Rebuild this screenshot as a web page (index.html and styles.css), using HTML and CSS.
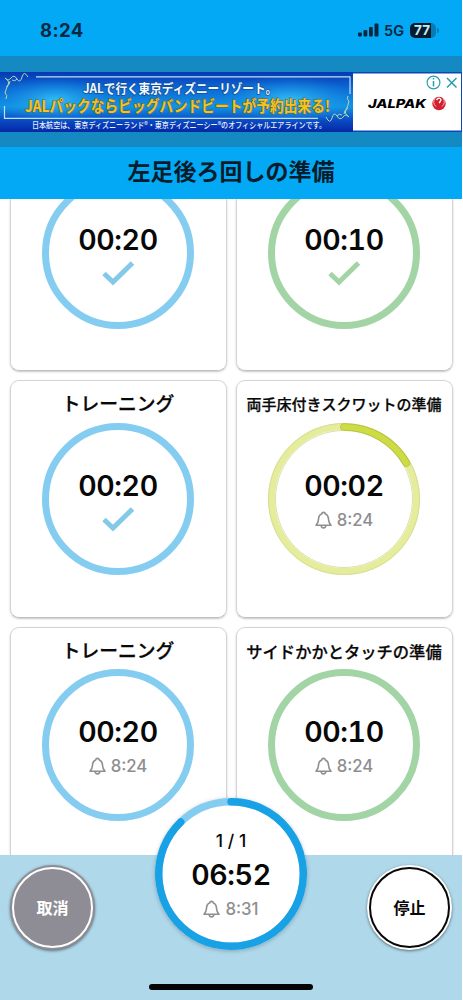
FILE: index.html
```html
<!DOCTYPE html>
<html lang="ja">
<head>
<meta charset="utf-8">
<title>左足後ろ回しの準備</title>
<link rel="stylesheet" href="styles.css">
</head>
<body>
<svg class="defs" aria-hidden="true">
  <symbol id="check" viewBox="0 0 32 26"><path d="M2 13.500 11 22 30.500 3" fill="none" stroke="currentColor" stroke-width="5"/></symbol>
  <symbol id="bell" viewBox="0 0 17 18"><path d="M1 14.200C3 12.200 3.400 11 3.500 8.200 3.600 5 5 3.500 6.700 2.900 7 .9 10 .9 10.300 2.900 12 3.500 13.400 5 13.500 8.200 13.600 11 14 12.200 16 14.200ZM6.100 14.500C6.300 17.600 10.700 17.600 10.900 14.500" fill="none" stroke="currentColor" stroke-width="1.600" stroke-linejoin="round"/></symbol>
</svg>
<div class="app">
  <header class="status">
    <span class="clock">8:24</span>
    <span class="indicators">
      <svg class="signal" viewBox="0 0 21 14"><rect x="0" y="9.500" width="3.800" height="4" rx="1"/><rect x="5.500" y="7" width="3.800" height="6.500" rx="1"/><rect x="11" y="4" width="3.800" height="9.500" rx="1"/><rect x="16.500" y=".5" width="4" height="13" rx="1"/></svg>
      <span class="network">5G</span>
      <span class="battery"><span class="cell">77</span><i class="tip"></i></span>
    </span>
  </header>
  <div class="adband">
    <div class="ad">
      <svg class="banner" viewBox="0 0 353 60">
        <defs>
          <linearGradient id="sky" x1="0" y1="0" x2="0" y2="1"><stop offset="0" stop-color="#0738b3"/><stop offset=".25" stop-color="#0b65d2"/><stop offset=".58" stop-color="#1194e4"/><stop offset=".8" stop-color="#0b4cc4"/><stop offset="1" stop-color="#0527a5"/></linearGradient>
          <radialGradient id="glow"><stop offset="0" stop-color="#35c5f7" stop-opacity=".9"/><stop offset="1" stop-color="#1590e6" stop-opacity="0"/></radialGradient>
        </defs>
        <rect width="353" height="60" fill="url(#sky)"/>
        <ellipse cx="55" cy="28" rx="60" ry="23" fill="url(#glow)"/>
        <ellipse cx="290" cy="28" rx="70" ry="24" fill="url(#glow)"/>
        <path d="M36 4.800H350V22M4.500 34V46.300H318" fill="none" stroke="#bfe0ef" stroke-width="1.200"/>
        <g fill="none" stroke="#b6d4ae" stroke-width="1">
          <path d="M5 6q3 4 6 0t6 1 5-2 6 0M5 6q5 3 3 7t-3 8M6 15q4-2 4-6M12 8q3 2 5-1M5 21q3 2 1 6"/>
          <path d="M349 45q-3-4-6 0t-6-1-5 2-6-1M349 45q-5-3-3-7t3-9M348 36q-4 2-4 6M342 43q-3-2-5 1M349 29q-3-2-1-5"/>
        </g>
        <g class="ad-text">
          <text x="83" y="21" font-size="13" textLength="194" lengthAdjust="spacingAndGlyphs" fill="#eefaff" stroke="#174f9b" stroke-width="1.600">JALで行く東京ディズニーリゾート。</text>
          <text x="25" y="39.500" font-size="15.500" textLength="305" lengthAdjust="spacingAndGlyphs" fill="#f6c21e" stroke="#5c6848" stroke-width="1.200">JALパックならビッグバンドビートが予約出来る!</text>
          <text class="fine" x="32" y="56.300" font-size="8.500" textLength="294" lengthAdjust="spacingAndGlyphs" fill="#e6f0ff">日本航空は、東京ディズニーランド®・東京ディズニーシー®のオフィシャルエアラインです。</text>
        </g>
      </svg>
      <svg class="brand" viewBox="0 0 109 60">
        <rect x="0" y="1.500" width="108" height="57" fill="#fff"/>
        <text class="jalpak" x="15" y="35.800" textLength="58" lengthAdjust="spacingAndGlyphs">JALPAK</text>
        <circle cx="86" cy="31.500" r="6.700" fill="#d3202f"/>
        <path d="M82 26q-3 5 1 8.500M90 26q3 5-1 8.500" fill="none" stroke="#f6c9c9" stroke-width=".9"/>
        <path d="M83.500 28q2.500-3.500 4.500-.5-.5 2-2 3.500" fill="none" stroke="#fff" stroke-width="1.300"/>
        <circle cx="80.500" cy="10.500" r="6.400" fill="none" stroke="#2a9db0" stroke-width="1.200"/>
        <path d="M80.500 9V14.500M80.500 6V7.600M94 6 103.500 15.500M103.500 6 94 15.500" stroke="#2a9db0" stroke-width="1.500"/>
      </svg>
    </div>
  </div>
  <h1 class="title">左足後ろ回しの準備</h1>
  <main class="list">
    <div class="grid">
      <section class="card"><div class="dial blue"><span class="time">00:20</span><svg class="check"><use href="#check"/></svg></div></section>
      <section class="card"><div class="dial green"><span class="time">00:10</span><svg class="check"><use href="#check"/></svg></div></section>
      <section class="card"><h2 class="name">トレーニング</h2><div class="dial blue"><span class="time">00:20</span><svg class="check"><use href="#check"/></svg></div></section>
      <section class="card"><h2 class="name small">両手床付きスクワットの準備</h2><div class="dial lime">
        <svg class="arc" viewBox="0 0 152 152"><circle cx="76" cy="76" r="75.500" fill="none" stroke="#d0d996" stroke-width=".8"/><circle cx="76" cy="76" r="68.500" fill="none" stroke="#d0d996" stroke-width=".8"/><path d="M76 4A72 72 0 0 1 138.350 40" fill="none" stroke="#b3bf3a" stroke-width="7.600" stroke-linecap="round"/><path d="M76 4A72 72 0 0 1 138.350 40" fill="none" stroke="#cddb45" stroke-width="6.200" stroke-linecap="round"/></svg>
        <span class="time">00:02</span><span class="alarm"><svg class="bell"><use href="#bell"/></svg>8:24</span></div></section>
      <section class="card"><h2 class="name">トレーニング</h2><div class="dial blue"><span class="time">00:20</span><span class="alarm"><svg class="bell"><use href="#bell"/></svg>8:24</span></div></section>
      <section class="card"><h2 class="name medium">サイドかかとタッチの準備</h2><div class="dial green"><span class="time">00:10</span><span class="alarm"><svg class="bell"><use href="#bell"/></svg>8:24</span></div></section>
    </div>
  </main>
  <footer class="controls">
    <button class="round cancel"><span class="ring">取消</span></button>
    <div class="dial total">
      <svg class="arc" viewBox="0 0 152 152"><circle cx="76" cy="76" r="72.300" fill="none" stroke="#85cdf0" stroke-width="7.400"/><path d="M76 3.700A72.300 72.300 0 1 1 25.800 24" fill="none" stroke="#19a1e5" stroke-width="7.400" stroke-linecap="round"/></svg>
      <span class="laps">1 / 1</span><span class="time">06:52</span><span class="alarm"><svg class="bell"><use href="#bell"/></svg>8:31</span>
    </div>
    <button class="round stop"><span class="ring">停止</span></button>
    <i class="home"></i>
  </footer>
</div>
</body>
</html>
```
FILE: styles.css
```css
* { box-sizing: border-box; }
body { margin: 0; background: #fff; color: #080808; font-family: Inter, "Noto Sans CJK JP", sans-serif; }
.defs { position: absolute; width: 0; height: 0; }
.app { width: 462px; height: 1000px; display: flex; flex-direction: column; overflow: hidden; }

.status { height: 56px; flex: none; background: #03a9f4; color: #062840; display: flex; justify-content: space-between; align-items: center; padding: 4px 23px 0 40px; }
.clock { font-size: 18.500px; font-weight: 700; letter-spacing: .4px; }
.indicators { display: flex; align-items: center; }
.signal { width: 21px; height: 14px; fill: #062840; }
.network { font-size: 14.500px; font-weight: 600; margin: 0 6px 0 5px; }
.battery { display: flex; align-items: center; gap: 1px; }
.cell { width: 26px; height: 15px; border-radius: 5px; background: linear-gradient(90deg, #041c2e 80%, #087bb4 80%); color: #c5e9fb; font-size: 13.500px; line-height: 15px; font-weight: 700; text-align: center; padding-right: 2px; }
.tip { width: 2px; height: 5px; border-radius: 0 2px 2px 0; background: #087bb4; }

.adband { height: 91px; flex: none; background: #1489c2; padding-top: 16px; }
.ad { height: 60px; display: flex; background: #1046b4; }
.banner { width: 353px; height: 60px; flex: none; }
.brand { width: 109px; height: 60px; flex: none; }
.ad-text { font-family: "Noto Sans CJK JP", sans-serif; font-weight: 700; paint-order: stroke; }
.fine { font-weight: 500; }
.jalpak { font-family: Inter, sans-serif; font-size: 12px; font-weight: 800; font-style: italic; }

.title { height: 52px; flex: none; margin: 0; background: #03a9f4; color: #051c2c; font-size: 23px; line-height: 50px; font-weight: 700; text-align: center; }

.list { height: 656px; flex: none; overflow: hidden; }
.grid { display: grid; grid-template-columns: 217px 217px; grid-template-rows: 172px 237.500px 237.500px; gap: 9px; padding: 0 9.500px; }
.card { border: 1.500px solid #d4d4d4; border-bottom-color: #c0c0c0; border-radius: 9px; box-shadow: 0 1px 2px rgba(0,0,0,.22); display: flex; flex-direction: column; align-items: center; }
.card:nth-child(-n+2) { border-top: 0; border-radius: 0 0 9px 9px; }
.card:nth-child(-n+2) .dial { margin-top: -22.500px; }
.name { height: 41.800px; margin: 0; padding-top: 10px; font-size: 18.800px; line-height: 28px; font-weight: 500; white-space: nowrap; -webkit-text-stroke: .25px; }
.name.small { font-size: 15px; }
.name.medium { font-size: 16.300px; }
.dial { position: relative; width: 152px; height: 152px; flex: none; border-radius: 50%; border: 7.300px solid; display: flex; flex-direction: column; align-items: center; }
.blue { border-color: #85cdf0; }
.green { border-color: #a3d4a5; }
.lime { border-color: #e5ed9d; }
.arc { position: absolute; left: 50%; top: 50%; width: 152px; height: 152px; margin: -76px 0 0 -76px; overflow: visible; }
.time { margin-top: 39px; font-size: 28.500px; line-height: 34px; font-weight: 600; letter-spacing: -.4px; font-variant-numeric: tabular-nums; }
.check { width: 32px; height: 26px; margin-top: 3px; color: #85c9e8; }
.green .check { color: #a3d4a5; }
.alarm { display: flex; align-items: center; gap: 5px; margin-top: 7px; font-size: 16.800px; line-height: 20px; font-weight: 500; color: #8e8e90; }
.bell { width: 17px; height: 18px; }

.controls { position: relative; height: 145px; flex: none; background: #afd8ea; display: flex; justify-content: space-between; align-items: flex-start; padding: 0 10px; }
.round { width: 85px; height: 85px; margin-top: 10px; border: 0; border-radius: 50%; padding: 2px; box-shadow: 0 1px 3px rgba(0,0,0,.5); font: 700 16px/1 "Noto Sans CJK JP", sans-serif; }
.ring { width: 81px; height: 81px; border: 2px solid; border-radius: 50%; display: flex; align-items: center; justify-content: center; padding-bottom: 2px; }
.cancel { background: #8e8d95; color: #fff; }
.stop { background: #fff; color: #080808; }
.total { margin-top: -57px; background: #fff; border: 0; box-shadow: 0 1px 4px rgba(0,0,0,.25); }
.laps { margin-top: 33px; font-size: 17.500px; line-height: 20px; font-weight: 500; }
.total .time { margin-top: 7px; }
.home { position: absolute; left: 149px; bottom: 10px; width: 164px; height: 6px; border-radius: 3px; background: #050505; }
```
